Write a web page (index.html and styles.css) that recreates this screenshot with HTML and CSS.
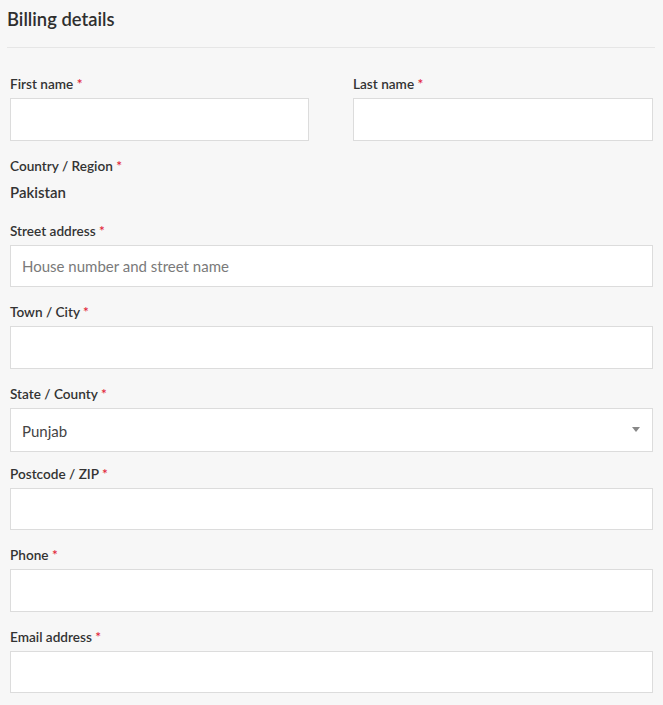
FILE: index.html
```html
<!DOCTYPE html>
<html>
<head>
<meta charset="utf-8">
<link rel="stylesheet" href="styles.css">
</head>
<body>
<div class="billing">
  <h3 class="title">Billing details</h3>
  <div class="fields">
    <div class="row-split">
      <p class="field">
        <label class="lbl">First name <abbr class="req">*</abbr></label>
        <input class="inp" type="text">
      </p>
      <p class="field">
        <label class="lbl">Last name <abbr class="req">*</abbr></label>
        <input class="inp" type="text">
      </p>
    </div>
    <p class="field">
      <label class="lbl">Country / Region <abbr class="req">*</abbr></label>
      <strong class="country">Pakistan</strong>
    </p>
    <p class="field">
      <label class="lbl">Street address <abbr class="req">*</abbr></label>
      <input class="inp" type="text" placeholder="House number and street name">
    </p>
    <p class="field">
      <label class="lbl">Town / City <abbr class="req">*</abbr></label>
      <input class="inp" type="text">
    </p>
    <p class="field field-select">
      <label class="lbl">State / County <abbr class="req">*</abbr></label>
      <span class="select">
        <span class="select-val">Punjab</span>
        <span class="arrow"></span>
      </span>
    </p>
    <p class="field">
      <label class="lbl">Postcode / ZIP <abbr class="req">*</abbr></label>
      <input class="inp" type="text">
    </p>
    <p class="field">
      <label class="lbl">Phone <abbr class="req">*</abbr></label>
      <input class="inp" type="tel">
    </p>
    <p class="field">
      <label class="lbl">Email address <abbr class="req">*</abbr></label>
      <input class="inp" type="email">
    </p>
  </div>
</div>
</body>
</html>
```
FILE: styles.css
```css
html, body {
  margin: 0;
  padding: 0;
  background: #f7f7f7;
}
body {
  font-family: Lato, "Open Sans", sans-serif;
  color: #333;
}
.billing {
  width: 648px;
  padding-left: 7px;
}
.title {
  margin: 0;
  padding: 6px 0 15px;
  font-size: 18.4px;
  line-height: 26px;
  font-weight: 600;
  color: #2f2f2f;
  border-bottom: 1px solid #e6e6e6;
}
.fields {
  padding: 26px 2px 0 3px;
}
.row-split {
  display: flex;
  justify-content: space-between;
}
.row-split .field {
  width: 300px;
}
.row-split .field:first-child {
  width: 299px;
}
.field {
  margin: 0 0 15px;
  display: flex;
  flex-direction: column;
}
.lbl {
  font-size: 13.6px;
  line-height: 20px;
  font-weight: 600;
  color: #333;
  margin-bottom: 4px;
}
.req {
  color: #e2263a;
  text-decoration: none;
  font-weight: 600;
}
.inp {
  box-sizing: border-box;
  height: 42.5px;
  width: 100%;
  margin: 0;
  border: 1px solid #dcdcdc;
  background: #fff;
  padding: 0 11px;
  font-family: Lato, sans-serif;
  font-size: 15px;
  color: #444;
  outline: none;
}
.inp::placeholder {
  color: #7a7a7a;
}
.country {
  font-size: 15px;
  line-height: 20px;
  font-weight: 600;
  color: #333;
  margin-top: 2px;
  margin-bottom: 4px;
}
.field-select {
  margin-bottom: 12px;
}
.select {
  box-sizing: border-box;
  height: 44px;
  border: 1px solid #dcdcdc;
  background: #fff;
  display: flex;
  align-items: center;
  justify-content: space-between;
  padding: 0 12px 0 11px;
}
.select-val {
  font-size: 15px;
  color: #444;
  padding-top: 2px;
}
.arrow {
  width: 0;
  height: 0;
  border-left: 4px solid transparent;
  border-right: 4px solid transparent;
  border-top: 5px solid #888;
}
```
